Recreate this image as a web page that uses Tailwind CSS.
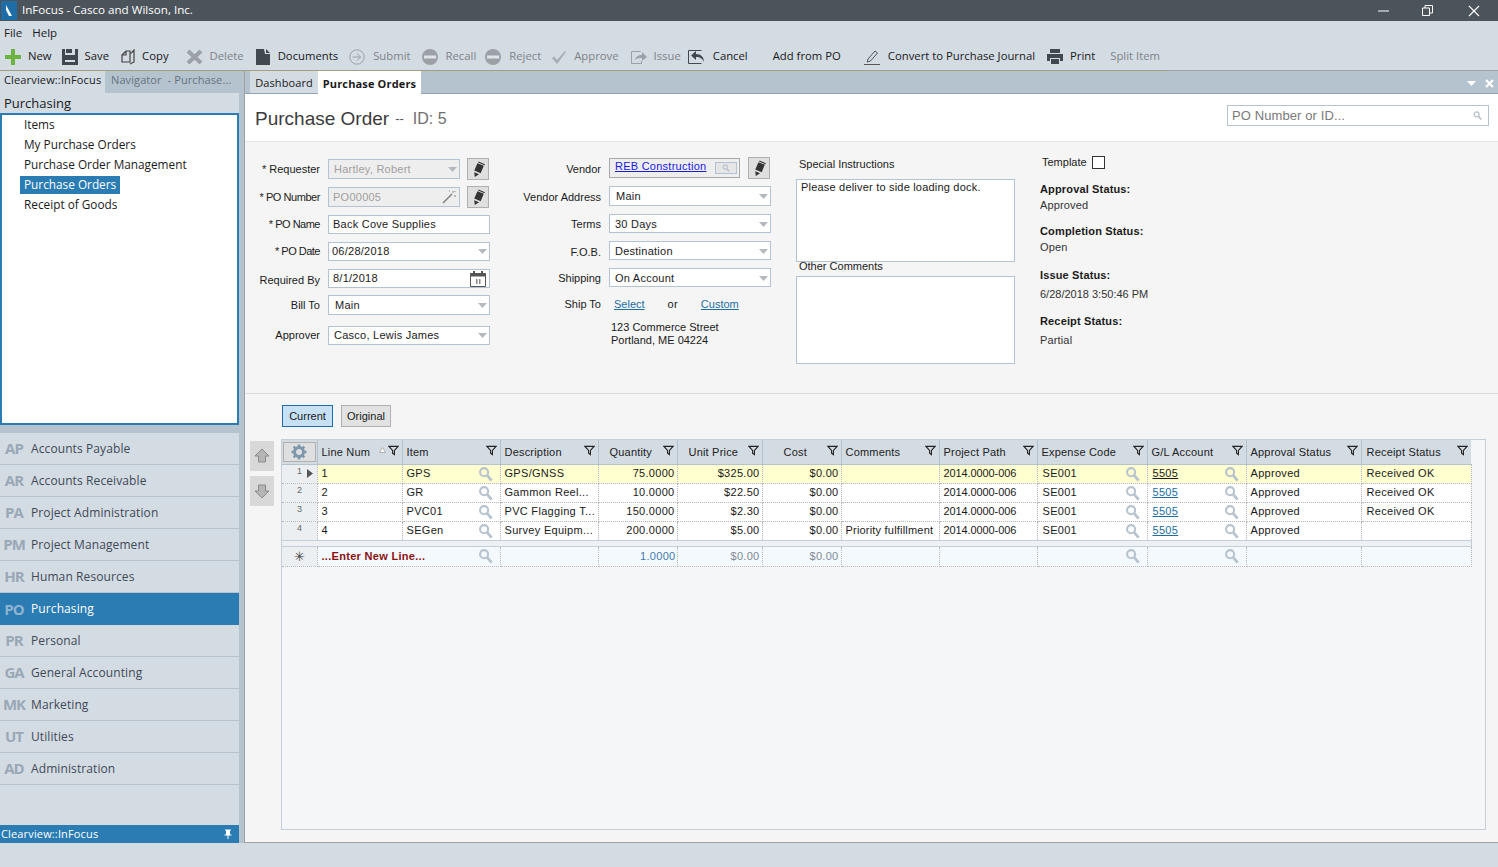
<!DOCTYPE html>
<html lang="en">
<head>
<meta charset="UTF-8" />
<title>InFocus - Casco and Wilson, Inc.</title>
<script src="https://cdn.jsdelivr.net/npm/@tailwindcss/browser@4"></script>
</head>
<body class="w-[1498px] h-[867px] overflow-hidden bg-[#d3dbe3] font-['Liberation_Sans',sans-serif] text-[11px] text-[#1a1a1a]">

<!-- shared icons -->
<svg class="hidden">
  <symbol id="search" viewBox="0 0 16 16"><circle cx="6.500" cy="6" r="4.300" fill="none" stroke="currentColor" stroke-width="2.200"/><path d="M9.800 9.500 14.500 15" stroke="currentColor" stroke-width="3"/></symbol>
  <symbol id="filter" viewBox="0 0 12 12"><path d="M1 1.500h10L7 6v4.500L5 9V6z" fill="none" stroke="#222" stroke-width="1.200"/></symbol>
  <symbol id="caret" viewBox="0 0 9 5"><path d="M0 0h9L4.500 5z" fill="#b4b9bf"/></symbol>
  <symbol id="pencil" viewBox="0 0 14 16"><path d="M6 2 12 4.500 9 11.500 3 9z" fill="#333"/><path d="M7 .5l6 2.500-.4 1-6-2.500z" fill="#333"/><path d="M3 10.500 7.500 12.400 3.500 15z" fill="#333"/></symbol>
</svg>

<!-- title bar -->
<div class="h-[21px] bg-[#4c545b] flex items-center text-white">
  <div class="w-[16px] h-[19px] bg-[#1f6da6] ml-[1px] flex items-center justify-center">
    <svg width="10" height="14" viewBox="0 0 10 14"><path d="M2 1 8 12 5 12 2 6z" fill="#fff"/></svg>
  </div>
  <span class="ml-[5px] pb-[2px] text-[11.600px] font-['Open_Sans',sans-serif]">InFocus - Casco and Wilson, Inc.</span>
  <div class="ml-auto flex items-center h-full">
    <svg width="12" height="12" viewBox="0 0 12 12" class="mr-[33px]"><path d="M1 6h11" stroke="#fff"/></svg>
    <svg width="11" height="11" viewBox="0 0 11 11" class="mr-[35px]"><path d="M.5 3h7v7.500h-7zM3 3V.5h7.500V8H7.500" fill="none" stroke="#fff"/></svg>
    <svg width="12" height="12" viewBox="0 0 12 12" class="mr-[18px]"><path d="M1 1l10 10M11 1 1 11" stroke="#fff" stroke-width="1.100"/></svg>
  </div>
</div>

<!-- menu -->
<div class="h-[20px] flex items-center pl-[4px] pt-[3px] gap-[10px] text-[11.500px] font-['Open_Sans',sans-serif]">
  <span>File</span><span>Help</span>
</div>

<!-- toolbar -->
<div class="h-[30px] flex items-center pt-[2px] text-[11.300px] font-['Open_Sans',sans-serif] border-b border-[#a0a0a0] relative">
  <div class="flex items-center ml-[5px] gap-[7px]">
    <svg width="16" height="16" viewBox="0 0 16 16"><path d="M6 0h4v6h6v4h-6v6H6v-6H0V6h6z" fill="#6db33f"/></svg><span>New</span>
  </div>
  <div class="flex items-center ml-[10px] gap-[7px]">
    <svg width="16" height="16" viewBox="0 0 16 16"><path d="M0 0h3v6h10V0h3v16H0zM4 0h6v4H4zM3 11h10v2H3z" fill="#41484f" fill-rule="evenodd"/></svg><span>Save</span>
  </div>
  <div class="flex items-center ml-[12px] gap-[7px]">
    <svg width="14" height="16" viewBox="0 0 14 16"><path d="M1 6 5 2h4v11H1zM5 2v4H1M9 4h1.500L13 1v12l-4 2" fill="none" stroke="#444" stroke-width="1.200"/></svg><span>Copy</span>
  </div>
  <div class="flex items-center ml-[17px] gap-[7px] text-[#808488]">
    <svg width="17" height="16" viewBox="0 0 17 16"><path d="M2 2 15 14M15 2 2 14" stroke="#9ba1a7" stroke-width="4"/></svg><span>Delete</span>
  </div>
  <div class="flex items-center ml-[12px] gap-[8px]">
    <svg width="14" height="16" viewBox="0 0 14 16"><path d="M0 0h8l1 5h5v11H0zM10 0l4 4h-4z" fill="#41484f"/></svg><span>Documents</span>
  </div>
  <div class="flex items-center ml-[11px] gap-[8px] text-[#808488]">
    <svg width="16" height="16" viewBox="0 0 16 16"><circle cx="8" cy="8" r="7.200" fill="none" stroke="#9ba1a7"/><path d="M3.500 8h8M8 4.500 11.500 8 8 11.500" fill="none" stroke="#9ba1a7"/></svg><span>Submit</span>
  </div>
  <div class="flex items-center ml-[11px] gap-[8px] text-[#808488]">
    <svg width="16" height="16" viewBox="0 0 16 16"><circle cx="8" cy="8" r="8" fill="#9ba1a7"/><path d="M2 6.500h12v3H2z" fill="#dfe4e9"/></svg><span>Recall</span>
  </div>
  <div class="flex items-center ml-[9px] gap-[8px] text-[#808488]">
    <svg width="16" height="16" viewBox="0 0 16 16"><circle cx="8" cy="8" r="8" fill="#9ba1a7"/><path d="M2 6.500h12v3H2z" fill="#dfe4e9"/></svg><span>Reject</span>
  </div>
  <div class="flex items-center ml-[10px] gap-[7px] text-[#808488]">
    <svg width="16" height="16" viewBox="0 0 16 16"><path d="M1 9l2-1.500L6 11 14 2l1 1L6 15z" fill="#a7adb3"/></svg><span>Approve</span>
  </div>
  <div class="flex items-center ml-[12px] gap-[7px] text-[#808488]">
    <svg width="16" height="16" viewBox="0 0 16 16"><path d="M.5 2.500h9M.5 2.500v12h10V12" fill="none" stroke="#9ba1a7"/><path d="M4 11c1-4 4-5 7-5V3l5 5-5 4V9c-3 0-5 0-7 2z" fill="#9ba1a7"/></svg><span>Issue</span>
  </div>
  <div class="flex items-center ml-[7px] gap-[8px]">
    <svg width="17" height="16" viewBox="0 0 17 16"><path d="M.5 1.500h13M.5 1.500v13h13" fill="none" stroke="#41484f"/><path d="M16 13c-1-3-4-5-8-5v3L3 6.500 8 2v3c5 0 8 3 8 8z" fill="#41484f"/></svg><span>Cancel</span>
  </div>
  <span class="ml-[25px]">Add from PO</span>
  <div class="flex items-center ml-[23px] gap-[8px]">
    <svg width="16" height="16" viewBox="0 0 16 16"><path d="M4 10 11 2l2.500 2L6.500 12l-3.200 1zM0 15.500h16" fill="none" stroke="#555"/></svg><span>Convert to Purchase Journal</span>
  </div>
  <div class="flex items-center ml-[12px] gap-[7px]">
    <svg width="16" height="15" viewBox="0 0 16 15"><path d="M3 0h10v4H3zM0 5h16v7h-3V9H3v3H0zM4 10h8v5H4z" fill="#41484f"/></svg><span>Print</span>
  </div>
  <span class="ml-[15px] text-[#808488]">Split Item</span>
  <div class="absolute left-0 bottom-[-1px] w-[1167px] h-[1px] bg-[#a39f80]"></div>
</div>

<div class="flex h-[772px]">
  <!-- left nav -->
  <aside class="w-[245px] flex bg-[#b5c3ce] shrink-0">
    <div class="w-[239px] flex flex-col bg-[#d3dbe3]">
      <div class="h-[22px] flex items-end bg-[#b5c3ce] font-['Open_Sans',sans-serif]">
        <div class="w-[105px] h-[22px] bg-[#d3dbe3] flex items-center pl-[4px] pb-[4px] text-[11px] tracking-[0.15px] whitespace-nowrap">Clearview::InFocus</div>
        <div class="flex-1 h-[22px] flex items-center pl-[6px] pb-[4px] text-[11px] tracking-[0.1px] text-[#66737f] whitespace-nowrap">Navigator&nbsp; - Purchase...</div>
      </div>
      <div class="h-[20px] flex items-center pl-[4px] pt-[2px] text-[13px] font-['Open_Sans',sans-serif]">Purchasing</div>
      <div class="h-[312px] bg-white border-2 border-[#2b7cb3] border-b-[2px] font-['Open_Sans',sans-serif] text-[11.800px]">
        <div class="h-[20px] flex items-center pl-[22px]">Items</div>
        <div class="h-[20px] flex items-center pl-[22px]">My Purchase Orders</div>
        <div class="h-[20px] flex items-center pl-[22px]">Purchase Order Management</div>
        <div class="h-[20px] flex items-center pl-[18px]"><span class="bg-[#2b7cb3] text-white px-[4px] h-[18px] flex items-center">Purchase Orders</span></div>
        <div class="h-[20px] flex items-center pl-[22px]">Receipt of Goods</div>
      </div>
      <div class="h-[8px] bg-[#b5c3ce]"></div>

      <div class="font-['Open_Sans',sans-serif] text-[12px] tracking-[0.1px] text-[#3f4a57]">
        <div class="h-[32px] flex items-center border-b border-[#b5c3ce]"><b class="w-[28px] text-center text-[15px] tracking-[-1px] text-[#9aa8b6] font-bold mr-[3px]">AP</b>Accounts Payable</div>
        <div class="h-[32px] flex items-center border-b border-[#b5c3ce]"><b class="w-[28px] text-center text-[15px] tracking-[-1px] text-[#9aa8b6] font-bold mr-[3px]">AR</b>Accounts Receivable</div>
        <div class="h-[32px] flex items-center border-b border-[#b5c3ce]"><b class="w-[28px] text-center text-[15px] tracking-[-1px] text-[#9aa8b6] font-bold mr-[3px]">PA</b>Project Administration</div>
        <div class="h-[32px] flex items-center border-b border-[#b5c3ce]"><b class="w-[28px] text-center text-[15px] tracking-[-1px] text-[#9aa8b6] font-bold mr-[3px]">PM</b>Project Management</div>
        <div class="h-[32px] flex items-center border-b border-[#b5c3ce]"><b class="w-[28px] text-center text-[15px] tracking-[-1px] text-[#9aa8b6] font-bold mr-[3px]">HR</b>Human Resources</div>
        <div class="h-[32px] flex items-center bg-[#2b7cb3] text-white"><b class="w-[28px] text-center text-[15px] tracking-[-1px] text-[#8fb4d0] font-bold mr-[3px]">PO</b>Purchasing</div>
        <div class="h-[32px] flex items-center border-b border-[#b5c3ce]"><b class="w-[28px] text-center text-[15px] tracking-[-1px] text-[#9aa8b6] font-bold mr-[3px]">PR</b>Personal</div>
        <div class="h-[32px] flex items-center border-b border-[#b5c3ce]"><b class="w-[28px] text-center text-[15px] tracking-[-1px] text-[#9aa8b6] font-bold mr-[3px]">GA</b>General Accounting</div>
        <div class="h-[32px] flex items-center border-b border-[#b5c3ce]"><b class="w-[28px] text-center text-[15px] tracking-[-1px] text-[#9aa8b6] font-bold mr-[3px]">MK</b>Marketing</div>
        <div class="h-[32px] flex items-center border-b border-[#b5c3ce]"><b class="w-[28px] text-center text-[15px] tracking-[-1px] text-[#9aa8b6] font-bold mr-[3px]">UT</b>Utilities</div>
        <div class="h-[32px] flex items-center border-b border-[#b5c3ce]"><b class="w-[28px] text-center text-[15px] tracking-[-1px] text-[#9aa8b6] font-bold mr-[3px]">AD</b>Administration</div>
      </div>

      <div class="flex-1"></div>
      <div class="h-[18px] bg-[#2b7cb3] text-white flex items-center pl-[1px] font-['Open_Sans',sans-serif] text-[11px] tracking-[0.15px]">
        Clearview::InFocus
        <svg width="8" height="10" viewBox="0 0 8 10" class="ml-auto mr-[7px]"><path d="M1 .500h6v1H6v4h1.500v1h-3V10h-1V6.500h-3v-1H2v-4H1z" fill="#fff"/></svg>
      </div>
    </div>
  </aside>

  <!-- main -->
  <main class="flex-1 flex flex-col border-l border-[#a0a0a0] -ml-[1px]">
    <div class="h-[23px] bg-[#b5c3ce] border-b border-[#8fa3b5] flex items-end pl-[5px] relative text-[11px]">
      <div class="w-[68px] h-[22px] bg-[#d3dbe3] flex items-center justify-center pt-[2px] text-[11px] tracking-[0.1px] font-['Open_Sans',sans-serif]">Dashboard</div>
      <div class="w-[103px] h-[23px] bg-white flex items-center justify-center pt-[3px] font-bold text-[11px] tracking-[0.15px] font-['Open_Sans',sans-serif] -mb-[1px]">Purchase Orders</div>
      <svg width="9" height="5" viewBox="0 0 9 5" class="absolute right-[22px] top-[10px]"><path d="M0 0h9L4.500 5z" fill="#fff"/></svg>
      <svg width="9" height="9" viewBox="0 0 9 9" class="absolute right-[4px] top-[8px]"><path d="M1 1l7 7M8 1 1 8" stroke="#fff" stroke-width="2.200"/></svg>
    </div>

    <div class="h-[48px] bg-white border-b border-[#e2e2e2] flex items-center pl-[10px] pt-[3px] relative">
      <span class="text-[19px] text-[#3c3c3c]">Purchase Order</span>
      <span class="ml-[6px] text-[13px] text-[#555]">--</span>
      <span class="ml-[9px] text-[16px] text-[#707070]">ID: 5</span>
      <div class="absolute left-[982px] top-[11px] w-[262px] h-[21px] border border-[#b5c3ce] flex items-center pl-[4px] text-[13px] tracking-[0.1px] text-[#7a7a7a]">
        PO Number or ID...
        <svg width="9" height="9" class="ml-auto mr-[6px] text-[#b8c2cb]"><use href="#search"/></svg>
      </div>
    </div>

    <!-- form -->
    <div class="h-[252px] bg-[#f5f5f5] border-b border-[#dedede] flex text-[11px] tracking-[0.25px]">
      <!-- col 1 -->
      <div class="w-[245px] pt-[17px] shrink-0 [&>div>span:first-child]:tracking-normal">
        <div class="h-[20px] flex items-center">
          <span class="w-[75px] text-right">* Requester</span>
          <div class="ml-[8px] w-[132px] h-[20px] bg-[#eeeeee] border border-[#b3c3d6] text-[#a0a0a0] flex items-center pl-[5px]">Hartley, Robert<svg width="9" height="5" class="ml-auto mr-[2px]"><use href="#caret"/></svg></div>
          <div class="ml-[7px] w-[22px] h-[22px] bg-[#dfdfdf] border border-[#b0b0b0] flex items-center justify-center"><svg width="15" height="17"><use href="#pencil"/></svg></div>
        </div>
        <div class="h-[20px] flex items-center mt-[8px]">
          <span class="w-[75px] text-right pt-[1px] !tracking-[-0.45px]">* PO Number</span>
          <div class="ml-[8px] w-[132px] h-[20px] bg-[#eeeeee] border border-[#b3c3d6] text-[#a0a0a0] flex items-center pl-[4px]">PO00005<svg width="14" height="14" viewBox="0 0 14 14" class="ml-auto mr-[3px]"><path d="M1 13 10 4" stroke="#7d7d7d" stroke-width="1.500"/><path d="M11 1v2M12 6h2M7 1h1M13 1v1" stroke="#8a8a8a"/></svg></div>
          <div class="ml-[7px] w-[22px] h-[22px] bg-[#dfdfdf] border border-[#b0b0b0] flex items-center justify-center"><svg width="15" height="17"><use href="#pencil"/></svg></div>
        </div>
        <div class="h-[19px] flex items-center mt-[8px]">
          <span class="w-[75px] text-right !tracking-[-0.5px]">* PO Name</span>
          <div class="ml-[8px] w-[162px] h-[19px] bg-white border border-[#b3c3d6] flex items-center pl-[4px]">Back Cove Supplies</div>
        </div>
        <div class="h-[19px] flex items-center mt-[8px]">
          <span class="w-[75px] text-right !tracking-[-0.5px]">* PO Date</span>
          <div class="ml-[8px] w-[162px] h-[19px] bg-white border border-[#b3c3d6] flex items-center pl-[3px]">06/28/2018<svg width="9" height="5" class="ml-auto mr-[2px]"><use href="#caret"/></svg></div>
        </div>
        <div class="h-[19px] flex items-center mt-[8px]">
          <span class="w-[75px] text-right pt-[3px]">Required By</span>
          <div class="ml-[8px] w-[162px] h-[19px] bg-white border border-[#b3c3d6] flex items-center pl-[4px]">8/1/2018<svg width="16" height="16" viewBox="0 0 16 16" class="ml-auto mr-[3px]"><path d="M.500 2.500h15v13H.500z" fill="#fff" stroke="#555"/><path d="M.500 2.500h15v3H.500zM3 0h2v3H3zM11 0h2v3h-2z" fill="#555"/><path d="M6 8h1.500v5H6zM9 8h1.500v5H9z" fill="#888"/></svg></div>
        </div>
        <div class="h-[20px] flex items-center mt-[7px]">
          <span class="w-[75px] text-right pt-[1px]">Bill To</span>
          <div class="ml-[8px] w-[162px] h-[20px] bg-white border border-[#b3c3d6] flex items-center pl-[6px]">Main<svg width="9" height="5" class="ml-auto mr-[2px]"><use href="#caret"/></svg></div>
        </div>
        <div class="h-[19px] flex items-center mt-[11px]">
          <span class="w-[75px] text-right">Approver</span>
          <div class="ml-[8px] w-[162px] h-[19px] bg-white border border-[#b3c3d6] flex items-center pl-[5px]">Casco, Lewis James<svg width="9" height="5" class="ml-auto mr-[2px]"><use href="#caret"/></svg></div>
        </div>
      </div>

      <!-- col 2 -->
      <div class="w-[306px] pt-[16px] shrink-0 [&>div>span:first-child]:tracking-normal">
        <div class="h-[20px] flex items-center">
          <span class="w-[111px] text-right pt-[2px]">Vendor</span>
          <div class="ml-[8px] w-[131px] h-[20px] bg-[#eeeeee] border border-[#a9a9a9] flex items-center pl-[5px]"><a class="text-[#1a1ae0] underline -mt-[3px]">REB Construction</a><span class="ml-auto mr-[2px] w-[22px] h-[12px] bg-[#e6e6e6] border border-[#b3c3d6] flex items-center justify-center"><svg width="8" height="8" class="text-[#b8c2cb]"><use href="#search"/></svg></span></div>
          <div class="ml-[8px] w-[22px] h-[22px] bg-[#dfdfdf] border border-[#b0b0b0] flex items-center justify-center"><svg width="15" height="17"><use href="#pencil"/></svg></div>
        </div>
        <div class="h-[20px] flex items-center mt-[8px]">
          <span class="w-[111px] text-right pt-[2px]">Vendor Address</span>
          <div class="ml-[8px] w-[162px] h-[20px] bg-white border border-[#b3c3d6] flex items-center pl-[6px]">Main<svg width="9" height="5" class="ml-auto mr-[2px]"><use href="#caret"/></svg></div>
        </div>
        <div class="h-[19px] flex items-center mt-[8px]">
          <span class="w-[111px] text-right pt-[1px]">Terms</span>
          <div class="ml-[8px] w-[162px] h-[19px] bg-white border border-[#b3c3d6] flex items-center pl-[5px] pt-[1px]">30 Days<svg width="9" height="5" class="ml-auto mr-[2px]"><use href="#caret"/></svg></div>
        </div>
        <div class="h-[19px] flex items-center mt-[8px]">
          <span class="w-[111px] text-right pt-[3px]">F.O.B.</span>
          <div class="ml-[8px] w-[162px] h-[19px] bg-white border border-[#b3c3d6] flex items-center pl-[5px] pt-[1px]">Destination<svg width="9" height="5" class="ml-auto mr-[2px]"><use href="#caret"/></svg></div>
        </div>
        <div class="h-[19px] flex items-center mt-[8px]">
          <span class="w-[111px] text-right pt-[1px]">Shipping</span>
          <div class="ml-[8px] w-[162px] h-[19px] bg-white border border-[#b3c3d6] flex items-center pl-[5px] pt-[1px]">On Account<svg width="9" height="5" class="ml-auto mr-[2px]"><use href="#caret"/></svg></div>
        </div>
        <div class="h-[19px] flex items-center mt-[8px]">
          <span class="w-[111px] text-right">Ship To</span>
          <a class="ml-[13px] text-[#1c6ea4] underline tracking-normal">Select</a>
          <span class="ml-[23px]">or</span>
          <a class="ml-[23px] text-[#1c6ea4] underline tracking-normal">Custom</a>
        </div>
        <div class="ml-[121px] mt-[7px] leading-[13px] tracking-normal">123 Commerce Street<br />Portland, ME 04224</div>
      </div>

      <!-- col 3 -->
      <div class="w-[244px] pt-[15px] shrink-0">
        <div class="pl-[3px] h-[14px] leading-[14px] text-[#222] tracking-normal">Special Instructions</div>
        <div class="mt-[8px] w-[219px] h-[83px] bg-white border border-[#b3c3d6] pl-[4px] pt-[1px] tracking-[0.2px] leading-[12px]">Please deliver to side loading dock.</div>
        <div class="pl-[3px] h-[14px] leading-[14px] text-[#222] tracking-normal -mt-[3px]">Other Comments</div>
        <div class="mt-[3px] w-[219px] h-[88px] bg-white border border-[#b3c3d6]"></div>
      </div>

      <!-- col 4 -->
      <div class="pt-[13px] tracking-[0.15px]">
        <div class="flex items-center h-[15px] pl-[2px] tracking-normal">Template<span class="ml-[5px] w-[13px] h-[13px] border border-[#333] bg-white"></span></div>
        <div class="font-bold mt-[12px] leading-[14px]">Approval Status:</div>
        <div class="mt-[2px] leading-[14px] text-[#333]">Approved</div>
        <div class="font-bold mt-[12px] leading-[14px]">Completion Status:</div>
        <div class="mt-[2px] leading-[14px] text-[#333]">Open</div>
        <div class="font-bold mt-[14px] leading-[14px]">Issue Status:</div>
        <div class="mt-[5px] leading-[14px] text-[#333] tracking-normal">6/28/2018 3:50:46 PM</div>
        <div class="font-bold mt-[13px] leading-[14px]">Receipt Status:</div>
        <div class="mt-[5px] leading-[14px] text-[#333]">Partial</div>
      </div>
    </div>

    <!-- lines -->
    <div class="flex-1 bg-[#f5f5f5] border-b border-[#a0a0a0] flex flex-col min-h-0">
      <div class="flex pl-[37px] pt-[11px] gap-[8px]">
        <div class="w-[51px] h-[22px] bg-[#c6e0f5] border border-[#1f6da6] flex items-center justify-center">Current</div>
        <div class="w-[50px] h-[22px] bg-[#e2e2e2] border border-[#b0b0b0] flex items-center justify-center">Original</div>
      </div>
      <div class="flex mt-[12px] h-[391px]">
        <div class="w-[36px] pl-[5px] pt-[2px] shrink-0">
          <div class="w-[24px] h-[30px] bg-[#d8d8d8] flex items-center justify-center"><svg width="16" height="16" viewBox="0 0 16 16"><path d="M8 1 15 8h-3.500v6h-7V8H1z" fill="#b5b5b5" stroke="#8a8a8a"/></svg></div>
          <div class="w-[24px] h-[30px] bg-[#d8d8d8] flex items-center justify-center mt-[5px]"><svg width="16" height="16" viewBox="0 0 16 16"><path d="M8 15 15 8h-3.500V2h-7v6H1z" fill="#b5b5b5" stroke="#8a8a8a"/></svg></div>
        </div>
        <div class="w-[1205px] h-[391px] border border-[#c3cfda] bg-[#f5f6f8] overflow-hidden">
          <table class="table-fixed border-collapse w-[1189px] text-[11px] tracking-[0.3px]">
            <colgroup>
              <col class="w-[35px]" /><col class="w-[85px]" /><col class="w-[98px]" /><col class="w-[98px]" /><col class="w-[79px]" /><col class="w-[85px]" /><col class="w-[79px]" /><col class="w-[98px]" /><col class="w-[98px]" /><col class="w-[110px]" /><col class="w-[99px]" /><col class="w-[115px]" /><col class="w-[110px]" />
            </colgroup>
            <thead>
              <tr class="h-[24px] bg-[#d3dbe3] text-[#222] tracking-[0.2px]">
                <th class="border-r border-b border-[#b5c3ce] p-0"><div class="mx-auto w-[33px] h-[20px] bg-[#dfdfdf] border border-[#b0b0b0] flex items-center justify-center"><svg width="16" height="16" viewBox="0 0 16 16"><circle cx="8" cy="8" r="4.500" fill="none" stroke="#7d97ad" stroke-width="3"/><path d="M8 .500v3M8 12.500v3M.500 8h3M12.500 8h3M2.700 2.700l2.100 2.100M11.200 11.200l2.100 2.100M13.300 2.700l-2.100 2.100M4.800 11.200l-2.100 2.100" stroke="#7d97ad" stroke-width="2.500"/></svg></div></th>
                <th class="border-r border-b border-[#b5c3ce] font-normal text-left pl-[4px] relative">Line Num<svg width="7" height="6" viewBox="0 0 7 6" class="absolute right-[16px] top-[7px]"><path d="M3.500 .500 6.500 5.500h-6z" fill="#fff" stroke="#b0b0b0"/></svg><svg width="11" height="11" class="absolute right-[3px] top-[5px]"><use href="#filter"/></svg></th>
                <th class="border-r border-b border-[#b5c3ce] font-normal text-left pl-[4px] relative">Item<svg width="11" height="11" class="absolute right-[3px] top-[5px]"><use href="#filter"/></svg></th>
                <th class="border-r border-b border-[#b5c3ce] font-normal text-left pl-[4px] relative">Description<svg width="11" height="11" class="absolute right-[3px] top-[5px]"><use href="#filter"/></svg></th>
                <th class="border-r border-b border-[#b5c3ce] font-normal text-left pl-[11px] relative">Quantity<svg width="11" height="11" class="absolute right-[3px] top-[5px]"><use href="#filter"/></svg></th>
                <th class="border-r border-b border-[#b5c3ce] font-normal text-left pl-[11px] relative">Unit Price<svg width="11" height="11" class="absolute right-[3px] top-[5px]"><use href="#filter"/></svg></th>
                <th class="border-r border-b border-[#b5c3ce] font-normal text-left pl-[21px] relative">Cost<svg width="11" height="11" class="absolute right-[3px] top-[5px]"><use href="#filter"/></svg></th>
                <th class="border-r border-b border-[#b5c3ce] font-normal text-left pl-[4px] relative">Comments<svg width="11" height="11" class="absolute right-[3px] top-[5px]"><use href="#filter"/></svg></th>
                <th class="border-r border-b border-[#b5c3ce] font-normal text-left pl-[4px] relative">Project Path<svg width="11" height="11" class="absolute right-[3px] top-[5px]"><use href="#filter"/></svg></th>
                <th class="border-r border-b border-[#b5c3ce] font-normal text-left pl-[4px] relative">Expense Code<svg width="11" height="11" class="absolute right-[3px] top-[5px]"><use href="#filter"/></svg></th>
                <th class="border-r border-b border-[#b5c3ce] font-normal text-left pl-[4px] relative">G/L Account<svg width="11" height="11" class="absolute right-[3px] top-[5px]"><use href="#filter"/></svg></th>
                <th class="border-r border-b border-[#b5c3ce] font-normal text-left pl-[4px] relative">Approval Status<svg width="11" height="11" class="absolute right-[3px] top-[5px]"><use href="#filter"/></svg></th>
                <th class="border-b border-[#b5c3ce] font-normal text-left pl-[5px] relative">Receipt Status<svg width="11" height="11" class="absolute right-[3px] top-[5px]"><use href="#filter"/></svg></th>
              </tr>
            </thead>
            <tbody class="[&_td]:border-r [&_td]:border-b [&_td]:border-dotted [&_td]:border-[#b8b8b8] [&_td]:p-0 [&_td]:relative">
              <tr class="h-[19px] bg-[#ffffd0]">
                <td class="!bg-[#eceff2] text-[9px] text-[#666]"><div class="flex items-center pl-[15px]"><span class="-mt-[3px]">1</span><svg width="6" height="9" viewBox="0 0 6 9" class="ml-[5px]"><path d="M0 0 6 4.500 0 9z" fill="#555"/></svg></div></td>
                <td class="!pl-[4px]">1</td>
                <td class="!pl-[4px]">GPS<svg width="15" height="16" class="absolute right-[7px] top-[1px] text-[#b7c4cf]"><use href="#search"/></svg></td>
                <td class="!pl-[4px]">GPS/GNSS</td>
                <td class="!pr-[2px] text-right">75.0000</td>
                <td class="!pr-[2px] text-right">$325.00</td>
                <td class="!pr-[2px] text-right">$0.00</td>
                <td></td>
                <td class="!pl-[4px] tracking-[-0.1px]">2014.0000-006</td>
                <td class="!pl-[5px]">SE001<svg width="15" height="16" class="absolute right-[7px] top-[1px] text-[#b7c4cf]"><use href="#search"/></svg></td>
                <td class="!pl-[5px]"><a class="underline">5505</a><svg width="15" height="16" class="absolute right-[7px] top-[1px] text-[#b7c4cf]"><use href="#search"/></svg></td>
                <td class="!pl-[4px]">Approved</td>
                <td class="!pl-[5px]">Received OK</td>
              </tr>
              <tr class="h-[19px] bg-white">
                <td class="!bg-[#eceff2] text-[9px] text-[#666]"><div class="pl-[15px] -mt-[3px]">2</div></td>
                <td class="!pl-[4px]">2</td>
                <td class="!pl-[4px]">GR<svg width="15" height="16" class="absolute right-[7px] top-[1px] text-[#b7c4cf]"><use href="#search"/></svg></td>
                <td class="!pl-[4px]">Gammon Reel...</td>
                <td class="!pr-[2px] text-right">10.0000</td>
                <td class="!pr-[2px] text-right">$22.50</td>
                <td class="!pr-[2px] text-right">$0.00</td>
                <td></td>
                <td class="!pl-[4px] tracking-[-0.1px]">2014.0000-006</td>
                <td class="!pl-[5px]">SE001<svg width="15" height="16" class="absolute right-[7px] top-[1px] text-[#b7c4cf]"><use href="#search"/></svg></td>
                <td class="!pl-[5px]"><a class="underline text-[#1c6ea4]">5505</a><svg width="15" height="16" class="absolute right-[7px] top-[1px] text-[#b7c4cf]"><use href="#search"/></svg></td>
                <td class="!pl-[4px]">Approved</td>
                <td class="!pl-[5px]">Received OK</td>
              </tr>
              <tr class="h-[19px] bg-white">
                <td class="!bg-[#eceff2] text-[9px] text-[#666]"><div class="pl-[15px] -mt-[3px]">3</div></td>
                <td class="!pl-[4px]">3</td>
                <td class="!pl-[4px]">PVC01<svg width="15" height="16" class="absolute right-[7px] top-[1px] text-[#b7c4cf]"><use href="#search"/></svg></td>
                <td class="!pl-[4px]">PVC Flagging T...</td>
                <td class="!pr-[2px] text-right">150.0000</td>
                <td class="!pr-[2px] text-right">$2.30</td>
                <td class="!pr-[2px] text-right">$0.00</td>
                <td></td>
                <td class="!pl-[4px] tracking-[-0.1px]">2014.0000-006</td>
                <td class="!pl-[5px]">SE001<svg width="15" height="16" class="absolute right-[7px] top-[1px] text-[#b7c4cf]"><use href="#search"/></svg></td>
                <td class="!pl-[5px]"><a class="underline text-[#1c6ea4]">5505</a><svg width="15" height="16" class="absolute right-[7px] top-[1px] text-[#b7c4cf]"><use href="#search"/></svg></td>
                <td class="!pl-[4px]">Approved</td>
                <td class="!pl-[5px]">Received OK</td>
              </tr>
              <tr class="h-[19px] bg-white">
                <td class="!bg-[#eceff2] text-[9px] text-[#666]"><div class="pl-[15px] -mt-[3px]">4</div></td>
                <td class="!pl-[4px]">4</td>
                <td class="!pl-[4px]">SEGen<svg width="15" height="16" class="absolute right-[7px] top-[1px] text-[#b7c4cf]"><use href="#search"/></svg></td>
                <td class="!pl-[4px]">Survey Equipm...</td>
                <td class="!pr-[2px] text-right">200.0000</td>
                <td class="!pr-[2px] text-right">$5.00</td>
                <td class="!pr-[2px] text-right">$0.00</td>
                <td class="!pl-[4px] tracking-[0.2px] whitespace-nowrap">Priority fulfillment</td>
                <td class="!pl-[4px] tracking-[-0.1px]">2014.0000-006</td>
                <td class="!pl-[5px]">SE001<svg width="15" height="16" class="absolute right-[7px] top-[1px] text-[#b7c4cf]"><use href="#search"/></svg></td>
                <td class="!pl-[5px]"><a class="underline text-[#1c6ea4]">5505</a><svg width="15" height="16" class="absolute right-[7px] top-[1px] text-[#b7c4cf]"><use href="#search"/></svg></td>
                <td class="!pl-[4px]">Approved</td>
                <td></td>
              </tr>
              <tr class="h-[6px] bg-[#eef1f4]"><td colspan="13" class="!border-[#c3cfda] !border-solid !border-t"></td></tr>
              <tr class="h-[20px] bg-[#f4f9fd] text-[#808a94]">
                <td class="!bg-[#eceff2] text-center text-[13px] text-[#444]">✳</td>
                <td colspan="2" class="!pl-[4px] font-bold text-[#8b1010]">...Enter New Line...<svg width="15" height="16" class="absolute right-[7px] top-[1px] text-[#b7c4cf]"><use href="#search"/></svg></td>
                <td></td>
                <td class="!pr-[1px] text-right text-[#3f7ca8]">1.0000</td>
                <td class="!pr-[2px] text-right">$0.00</td>
                <td class="!pr-[2px] text-right">$0.00</td>
                <td></td>
                <td></td>
                <td><svg width="15" height="16" class="absolute right-[7px] top-[1px] text-[#b7c4cf]"><use href="#search"/></svg></td>
                <td><svg width="15" height="16" class="absolute right-[7px] top-[1px] text-[#b7c4cf]"><use href="#search"/></svg></td>
                <td></td>
                <td></td>
              </tr>
            </tbody>
          </table>
        </div>
      </div>
    </div>
  </main>
</div>
</body>
</html>
